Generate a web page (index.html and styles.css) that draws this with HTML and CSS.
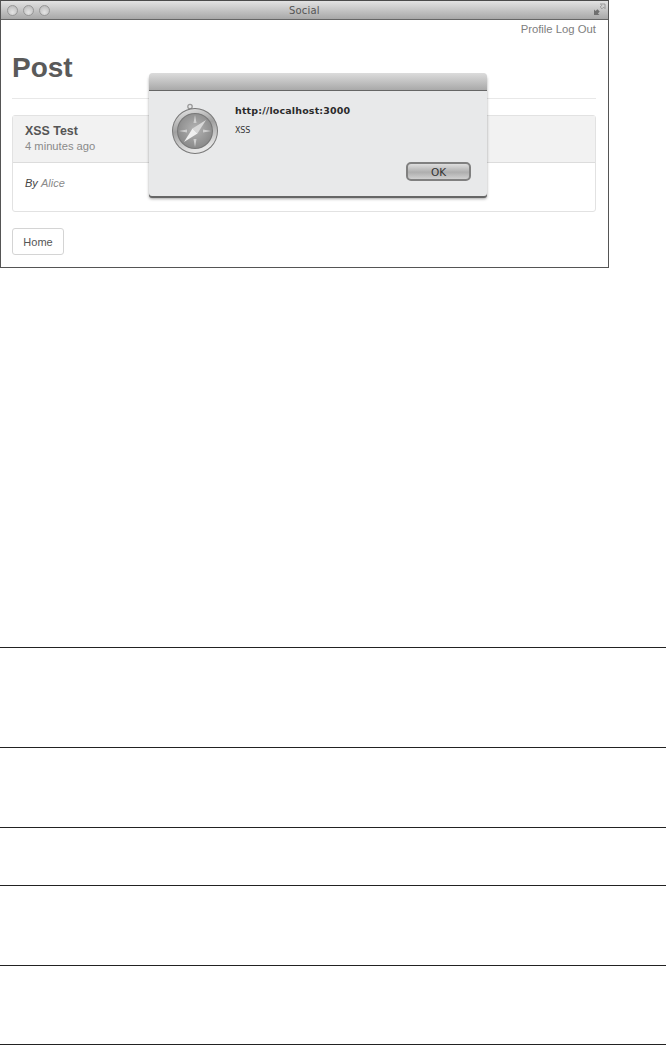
FILE: index.html
```html
<!DOCTYPE html>
<html lang="en">
<head>
<meta charset="utf-8">
<title>Social</title>
<link rel="stylesheet" href="styles.css">
</head>
<body>
<div class="window">
  <div class="titlebar">
    <div class="lights"><span class="light"></span><span class="light"></span><span class="light"></span></div>
    <div class="title">Social</div>
    <svg class="expand" width="13" height="13" viewBox="0 0 13 13">
      <path d="M1 12V6.5l1.6 1.6L4.4 6.3l2.3 2.3-1.8 1.8L6.5 12z" fill="#6f6f6f"/>
      <path d="M12 1v4.6L10.6 4.2 9 5.8 7.2 4 8.8 2.4 7.4 1z" fill="none" stroke="#8a8a8a" stroke-width=".8"/>
    </svg>
  </div>
  <div class="content">
    <div class="topnav"><a>Profile</a> <a>Log Out</a></div>
    <h1 class="heading">Post</h1>
    <div class="card">
      <div class="card-head">
        <div class="card-title">XSS Test</div>
        <div class="card-time">4 minutes ago</div>
      </div>
      <div class="card-body"><em class="by">By</em> <em class="author">Alice</em></div>
    </div>
    <a class="btn">Home</a>
  </div>
  <div class="dialog">
    <div class="dialog-bar"></div>
    <div class="dialog-body">
      <svg class="compass" width="50" height="52" viewBox="0 0 50 52">
        <defs>
          <linearGradient id="rim" x1="0" y1="0" x2="0.3" y2="1">
            <stop offset="0" stop-color="#ececec"/>
            <stop offset="0.5" stop-color="#a0a0a0"/>
            <stop offset="1" stop-color="#e6e6e6"/>
          </linearGradient>
          <radialGradient id="face" cx="0.5" cy="0.45" r="0.6">
            <stop offset="0" stop-color="#b4b4b4"/>
            <stop offset="1" stop-color="#868686"/>
          </radialGradient>
        </defs>
        <circle cx="19" cy="3.5" r="2.2" fill="none" stroke="#9a9a9a" stroke-width="1.3"/>
        <circle cx="24" cy="28" r="23" fill="#777"/>
        <circle cx="24" cy="28" r="22" fill="url(#rim)"/>
        <circle cx="24" cy="28" r="18" fill="#777"/>
        <circle cx="24" cy="28" r="17" fill="url(#face)"/>
        <path d="M24 12l1.5 8h-3zM24 44l1.5-8h-3zM8 28l8-1.5v3zM40 28l-8-1.5v3z" fill="#cfcfcf"/>
        <path d="M35 17L26.5 30.5 21.5 25.5z" fill="#d8d8d8"/>
        <path d="M13 39L21.5 25.5 26.5 30.5z" fill="#f0f0f0"/>
      </svg>
      <div class="dialog-text">
        <div class="dialog-url">http://localhost:3000</div>
        <div class="dialog-msg">XSS</div>
      </div>
      <button class="ok">OK</button>
    </div>
  </div>
</div>
<div class="rules">
  <div class="rule rule-100"></div>
  <div class="rule rule-80"></div>
  <div class="rule rule-58"></div>
  <div class="rule rule-80"></div>
  <div class="rule rule-79"></div>
  <div class="rule rule-end"></div>
</div>
</body>
</html>
```
FILE: styles.css
```css
* { box-sizing: border-box; }
html, body { margin: 0; padding: 0; background: #fff; }
body {
  height: 1045px;
  overflow: hidden;
  font-family: "Liberation Sans", Arial, sans-serif;
}
.window {
  position: relative;
  width: 609px;
  height: 268px;
  border: 1px solid #555;
  border-top-color: #4a4a4a;
  background: #fff;
}
.titlebar {
  height: 19px;
  display: flex;
  align-items: center;
  padding: 0 2px 0 6px;
  background: linear-gradient(#e2e2e2, #a8a8a8);
  border-bottom: 1px solid #666;
}
.lights { display: flex; gap: 5px; width: 274px; }
.light {
  width: 11px;
  height: 11px;
  border-radius: 50%;
  border: 1px solid #979797;
  background: radial-gradient(circle at 50% 70%, #e4e4e4, #b4b4b4);
}
.title {
  flex: 1;
  font-family: "DejaVu Sans", sans-serif;
  font-size: 10px;
  color: #555;
  letter-spacing: 0.2px;
  padding-left: 8px;
}
.expand { flex: none; margin-top: -2px; }
.content { padding: 0 12px 0 11px; }
.topnav {
  height: 18px;
  text-align: right;
  font-size: 11.3px;
  line-height: 18px;
  color: #808080;
}
.heading {
  margin: 0;
  height: 61px;
  padding-top: 13px;
  font-size: 28px;
  line-height: 34px;
  font-weight: bold;
  color: #5a5a5a;
  border-bottom: 1px solid #e8e8e8;
}
.card {
  margin-top: 16px;
  height: 97px;
  border: 1px solid #e2e2e2;
  border-radius: 3px;
  background: #fff;
}
.card-head {
  height: 47px;
  padding: 8px 12px 0;
  background: #f2f2f2;
  border-bottom: 1px solid #dcdcdc;
}
.card-title { font-size: 12.4px; line-height: 15px; font-weight: bold; color: #555; }
.card-time { font-size: 11.2px; line-height: 14px; color: #8a8a8a; }
.card-body { padding: 13px 12px; font-size: 11px; line-height: 14px; }
.by { color: #444; }
.author { color: #8a8a8a; }
.btn {
  display: flex;
  align-items: center;
  justify-content: center;
  margin-top: 16px;
  width: 52px;
  height: 27px;
  border: 1px solid #d4d4d4;
  border-radius: 3px;
  font-size: 11px;
  color: #555;
}
.dialog {
  position: absolute;
  left: 148px;
  top: 72px;
  width: 338px;
  height: 123px;
  border-radius: 4px 4px 3px 3px;
  background: #e8e9ea;
  box-shadow: 0 2px 0 #666, 0 3px 3px rgba(0, 0, 0, 0.35);
  overflow: hidden;
}
.dialog-bar {
  height: 18px;
  background: linear-gradient(#dcdcdc, #a9a9a9);
  border-bottom: 1px solid #666;
}
.dialog-body {
  position: relative;
  height: 105px;
  display: flex;
  align-items: flex-start;
  padding: 12px 0 0 22px;
}
.compass { flex: none; }
.dialog-text { margin-left: 14px; }
.dialog-url {
  font-family: "DejaVu Sans", sans-serif;
  font-size: 9.5px;
  line-height: 12px;
  font-weight: bold;
  letter-spacing: 0.15px;
  color: #2b2b2b;
  margin-top: 2px;
}
.dialog-msg {
  margin-top: 9px;
  font-family: "DejaVu Sans", sans-serif;
  font-size: 8px;
  line-height: 10px;
  letter-spacing: -0.2px;
  color: #333;
}
.ok {
  position: absolute;
  left: 257px;
  top: 71px;
  width: 65px;
  height: 19px;
  padding: 0;
  border: 2px solid #808080;
  border-radius: 5px;
  background: linear-gradient(#dedede, #aeaeae 55%, #d0d0d0);
  font-family: "DejaVu Sans", sans-serif;
  font-size: 10.5px;
  color: #333;
}
.rules {
  display: flex;
  flex-direction: column;
  margin-top: 379px;
}
.rule { border-top: 1px solid #222; }
.rule-100 { height: 100px; }
.rule-80 { height: 80px; }
.rule-58 { height: 58px; }
.rule-79 { height: 79px; }
.rule-end { height: 1px; }
```
